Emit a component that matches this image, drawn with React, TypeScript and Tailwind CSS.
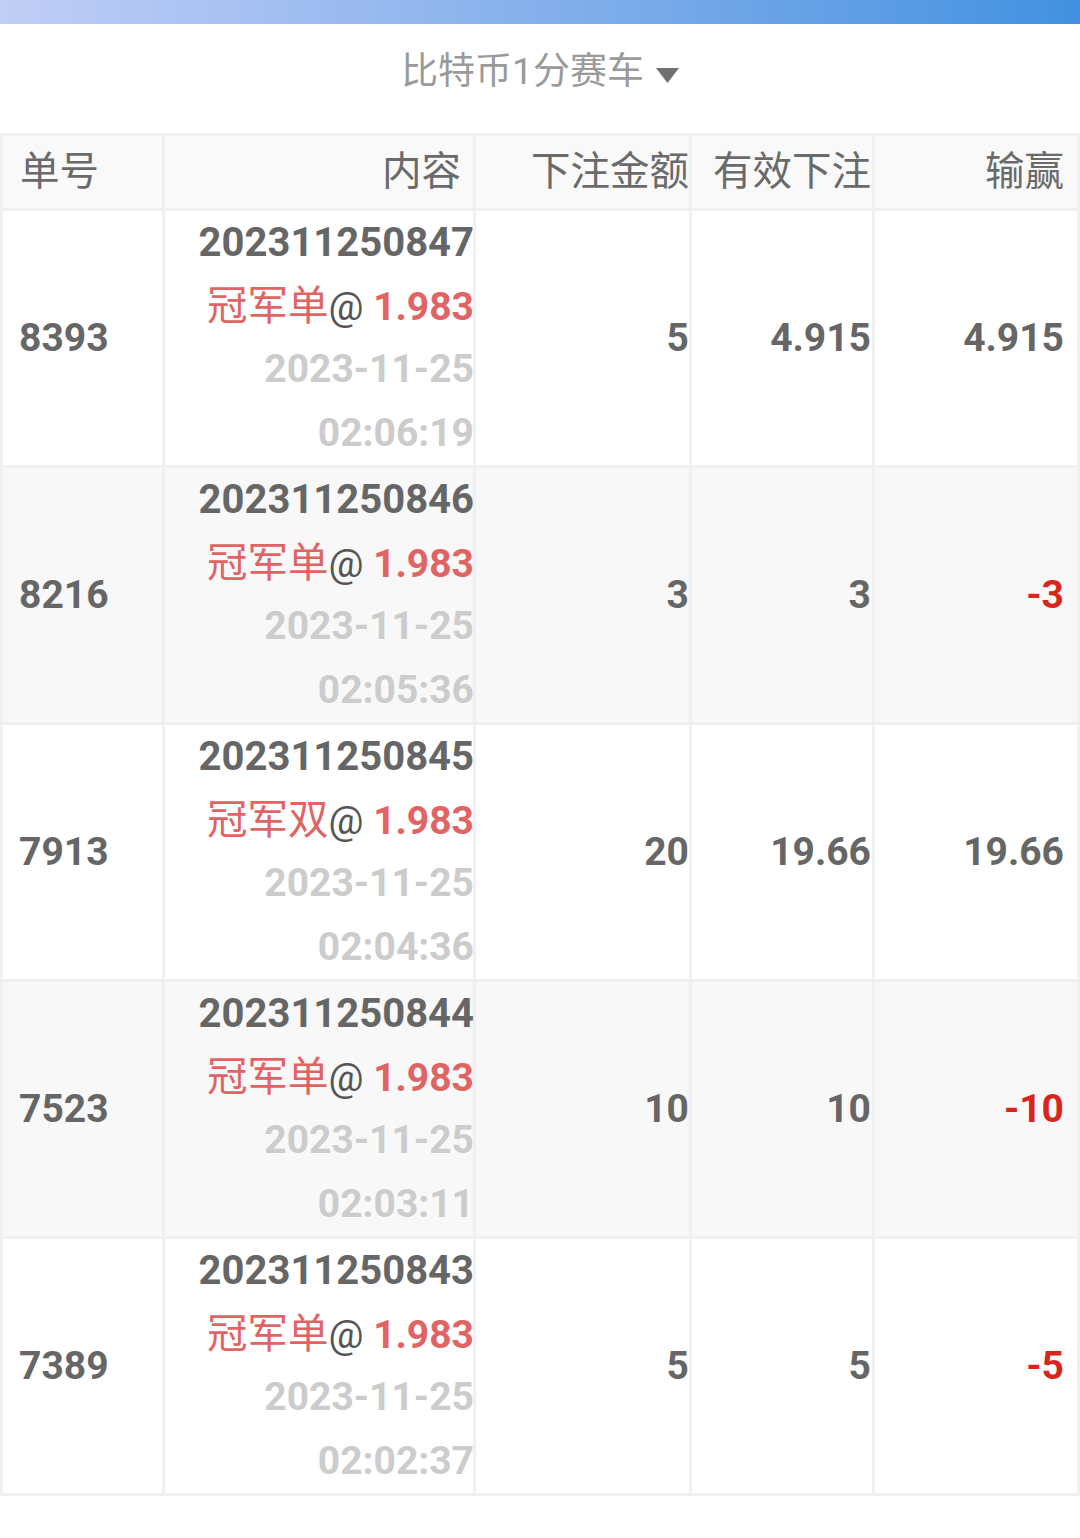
import * as React from 'react';

type Bet = {
	id: string;
	no: string;
	pick: string;
	odds: string;
	date: string;
	time: string;
	amount: string;
	valid: string;
	win: string;
};

const bets: Bet[] = [
	{ id: '8393', no: '202311250847', pick: '冠军单', odds: '1.983', date: '2023-11-25', time: '02:06:19', amount: '5', valid: '4.915', win: '4.915' },
	{ id: '8216', no: '202311250846', pick: '冠军单', odds: '1.983', date: '2023-11-25', time: '02:05:36', amount: '3', valid: '3', win: '-3' },
	{ id: '7913', no: '202311250845', pick: '冠军双', odds: '1.983', date: '2023-11-25', time: '02:04:36', amount: '20', valid: '19.66', win: '19.66' },
	{ id: '7523', no: '202311250844', pick: '冠军单', odds: '1.983', date: '2023-11-25', time: '02:03:11', amount: '10', valid: '10', win: '-10' },
	{ id: '7389', no: '202311250843', pick: '冠军单', odds: '1.983', date: '2023-11-25', time: '02:02:37', amount: '5', valid: '5', win: '-5' }
];

const App: React.FC = () => {
	return (
		<div className="min-h-[1538px] bg-white font-['Roboto','Noto_Sans_CJK_SC',sans-serif]">
			<div className="h-[24px] bg-gradient-to-r from-[#c1cef6] to-[#4091e0]" />

			{/* lottery picker */}
			<div className="flex h-[109px] items-center justify-center gap-[12px] pb-[14px] text-[37px] text-[#9a9a9a]">
				<span>比特币1分赛车</span>
				<svg width="23" height="15" viewBox="0 0 23 15" className="mt-[8px]">
					<path d="M0 0 H23 L11.5 15 Z" fill="#707070" />
				</svg>
			</div>

			<table className="w-[1080px] table-fixed border-separate border-spacing-[3px] bg-[#f0f0f0]">
				<colgroup>
					<col className="w-[159px]" />
					<col className="w-[308px]" />
					<col className="w-[213px]" />
					<col className="w-[180px]" />
					<col className="w-[202px]" />
				</colgroup>
				<thead>
					<tr className="h-[72px] bg-[#f9f9f9] text-[39.5px] text-[#6a6a6a]">
						<th className="pl-[17px] text-left font-normal">单号</th>
						<th className="pr-[12px] text-right font-normal">内容</th>
						<th className="pr-0 text-right font-normal whitespace-nowrap">下注金额</th>
						<th className="pr-[1px] text-right font-normal whitespace-nowrap">有效下注</th>
						<th className="pr-[13px] text-right font-normal">输赢</th>
					</tr>
				</thead>
				<tbody>
					{bets.map((b, i) => (
						<tr
							key={b.id}
							className={`text-[39px] font-bold text-[#666666] ${i % 2 === 1 ? 'bg-[#f8f8f8]' : 'bg-white'}`}
						>
							<td className="pl-[16px] align-middle">{b.id}</td>
							<td className="p-0 text-right leading-[63.5px] whitespace-nowrap">
								<div className="-mr-[1px] h-[63.5px] text-[40px]">{b.no}</div>
								<div className="-mr-[1px] h-[63.5px]">
									<span className="text-[40.5px] font-normal text-[#e06464]">{b.pick}</span>
									<span className="font-normal text-[#555555]">@</span>{' '}
									<span className="text-[#e06464]">{b.odds}</span>
								</div>
								<div className="-mr-[1px] h-[63.5px] text-[#cccccc]">{b.date}</div>
								<div className="-mr-[1px] h-[63.5px] text-[#cccccc]">{b.time}</div>
							</td>
							<td className="p-0 text-right">{b.amount}</td>
							<td className="pr-[1px] text-right">{b.valid}</td>
							<td
								className={`pr-[13px] text-right ${b.win.startsWith('-') ? 'text-[#d8261c]' : ''}`}
							>
								{b.win}
							</td>
						</tr>
					))}
				</tbody>
			</table>
		</div>
	);
};

export default App;
